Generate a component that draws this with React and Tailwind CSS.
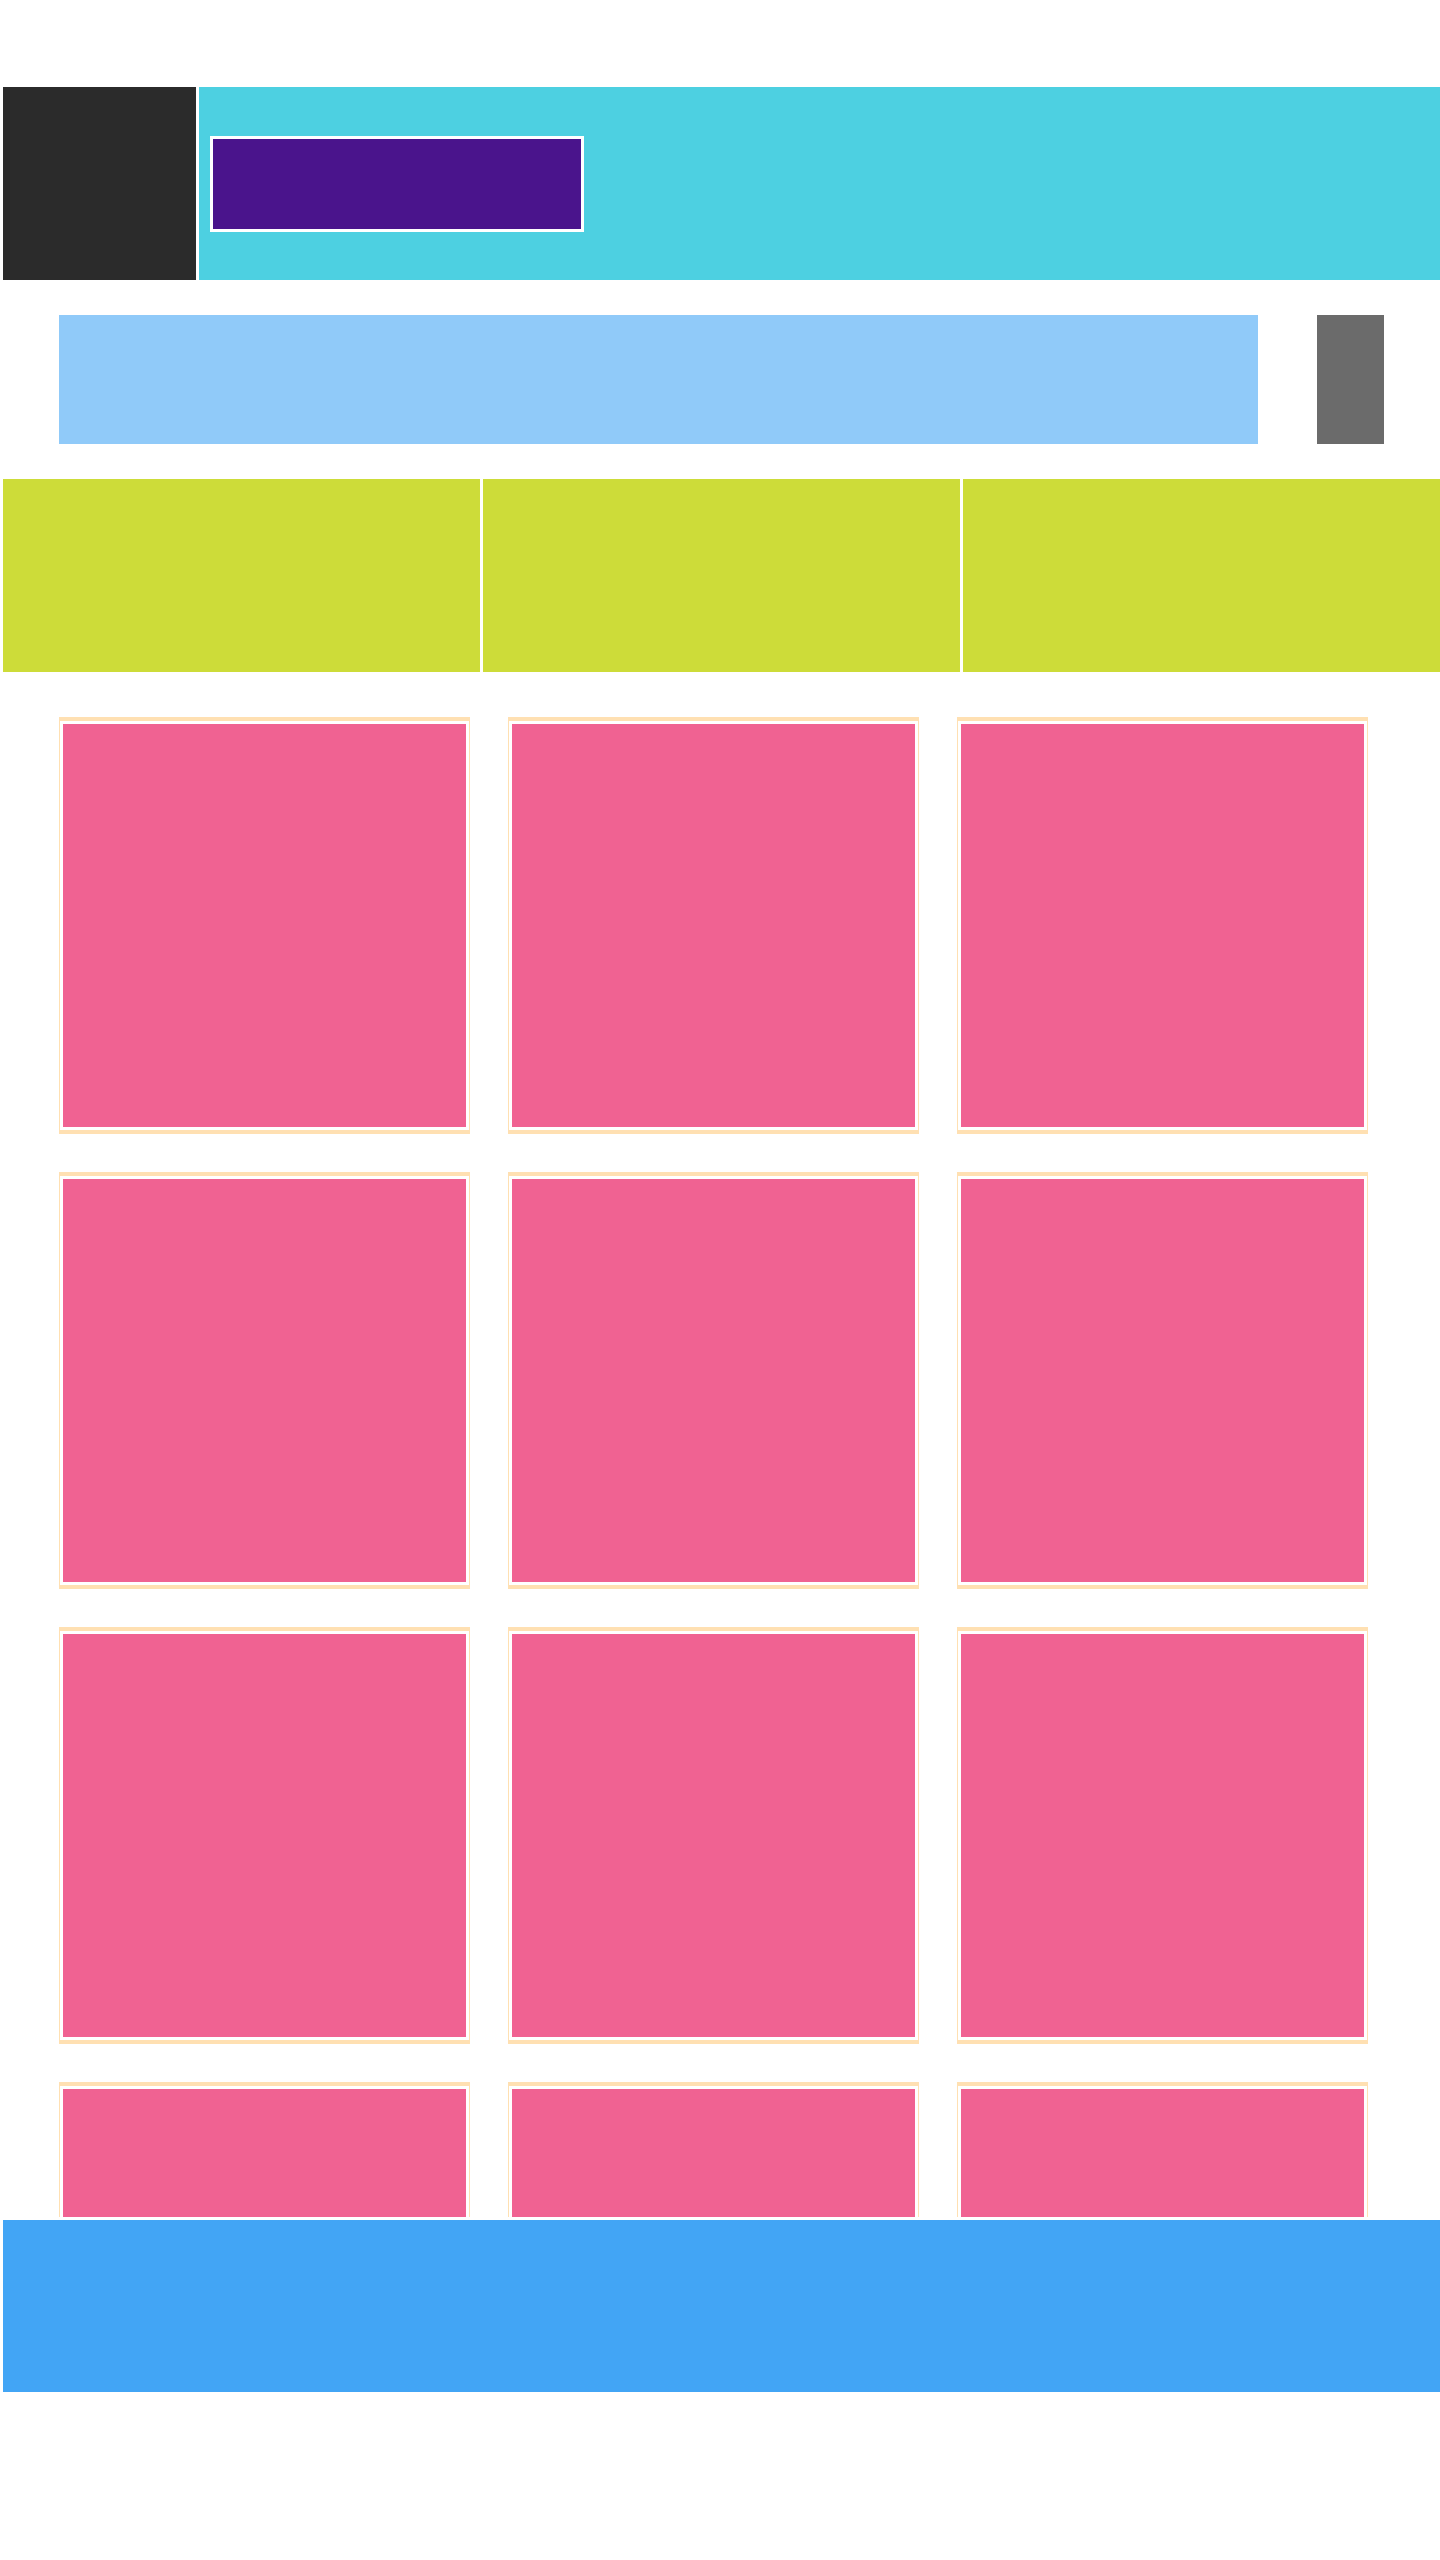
export default function App() {
  const cards = Array.from({ length: 12 });
  return (
    <div className="min-h-[2560px] w-[1440px] bg-white pl-[3px] pt-[87px] flex flex-col font-['Liberation_Sans',sans-serif]">
      {/* Header */}
      <div className="h-[193px] flex gap-[3px]">
        <div className="w-[193px] shrink-0 bg-[#2b2b2b]" />
        <div className="flex-1 bg-[#4dd0e1] flex items-center pl-[11px]">
          <div className="w-[374px] h-[96px] border-[3px] border-white bg-[#4a148c]" />
        </div>
      </div>

      {/* Search row */}
      <div className="mt-[35px] h-[129px] flex gap-[59px] pl-[56px]">
        <div className="w-[1199px] bg-[#90caf9]" />
        <div className="w-[67px] bg-[#6b6b6b]" />
      </div>

      {/* Tabs */}
      <div className="mt-[35px] h-[193px] grid grid-cols-3 gap-[3px]">
        <div className="bg-[#cddc39]" />
        <div className="bg-[#cddc39]" />
        <div className="bg-[#cddc39]" />
      </div>

      {/* Cards area */}
      <div className="mt-[3px] h-[1542px] overflow-hidden pt-[42px] pl-[56px]">
        <div className="grid grid-cols-[repeat(3,411px)] gap-[38px]">
          {cards.map((_, i) => (
            <div
              key={i}
              className="border-x border-y-4 border-[#ffe0b2] p-[3px] bg-white"
            >
              <div className="h-[403px] bg-[#f06292]" />
            </div>
          ))}
        </div>
      </div>

      {/* Footer */}
      <div className="mt-[3px] h-[172px] bg-[#42a5f5]" />
    </div>
  );
}
